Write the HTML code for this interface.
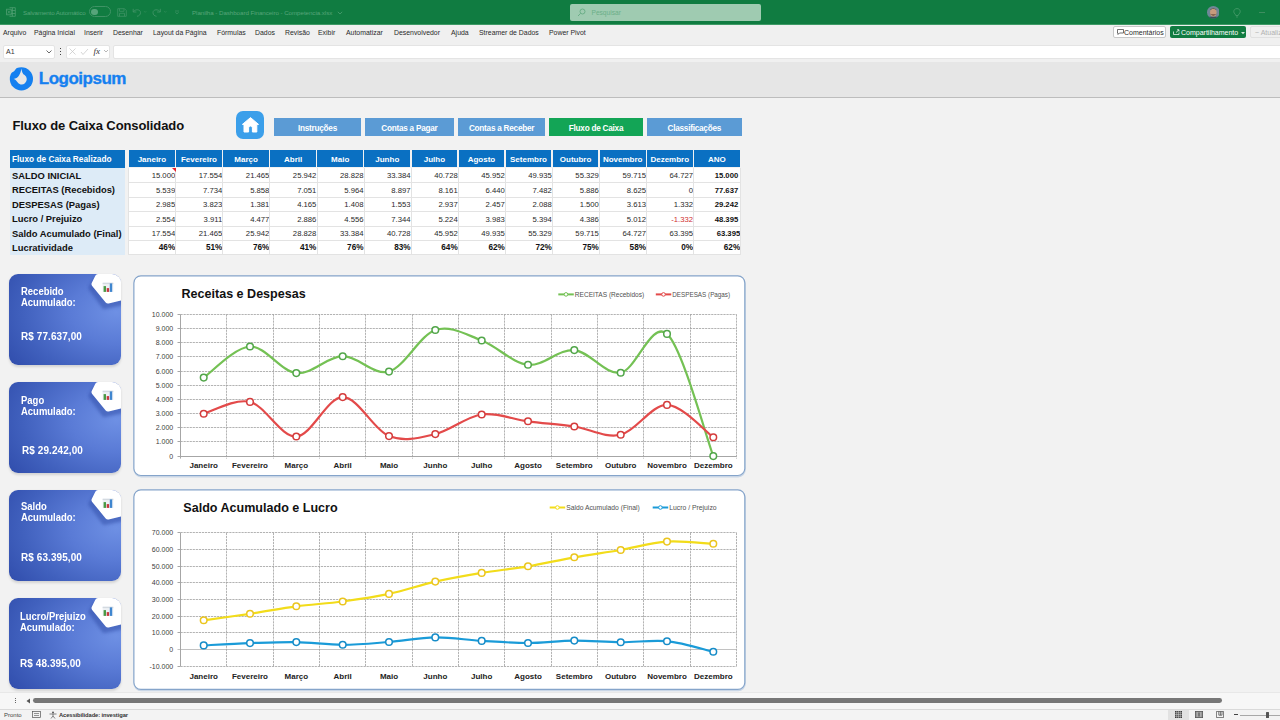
<!DOCTYPE html>
<html><head><meta charset="utf-8">
<style>
*{margin:0;padding:0;box-sizing:border-box;}
html,body{width:1280px;height:720px;overflow:hidden;background:#F2F2F2;font-family:"Liberation Sans",sans-serif;}
.abs{position:absolute;}
#titlebar{position:absolute;left:0;top:0;width:1280px;height:25px;background:#107C41;border-bottom:1px solid #3E9A66;}
#menubar{position:absolute;left:0;top:25px;width:1280px;height:37px;background:#F0F0F0;}
.menu{position:absolute;top:29.3px;font-size:6.9px;color:#2A2A2A;white-space:nowrap;}
#band{position:absolute;left:0;top:62px;width:1280px;height:36px;background:#E6E6E6;border-bottom:1.5px solid #BDBDBD;}
.tt{position:absolute;white-space:nowrap;}
.btn{position:absolute;top:118px;height:18px;background:#5B9BD5;color:#fff;font-size:8.2px;font-weight:bold;text-align:center;line-height:21px;letter-spacing:-0.24px;white-space:nowrap;}
.lh{position:absolute;background:#0A70C2;color:#fff;font-size:8.3px;font-weight:bold;line-height:18px;padding-left:2px;padding-top:0.8px;white-space:nowrap;}
.lbg{position:absolute;background:#DDEBF7;}
.mh{position:absolute;background:#0A70C2;color:#fff;font-size:8px;font-weight:bold;text-align:center;line-height:17px;padding-top:0.5px;white-space:nowrap;}
.dbg{position:absolute;background:#fff;}
.rl{position:absolute;font-size:9.4px;font-weight:bold;color:#111;white-space:nowrap;padding-top:1px;}
.dc{position:absolute;font-size:7.7px;color:#2A2A2A;text-align:right;white-space:nowrap;padding-top:1.6px;}
.dc.b{font-weight:bold;color:#111;}
.dc.neg{color:#D03030;}
.dc.ano{padding-right:2px;}
.dc.pc{font-size:8.2px;padding-top:1.2px;}
.vl{position:absolute;width:1px;background:#E3E3E3;}
.hl{position:absolute;height:1px;background:#E3E3E3;}
.card{position:absolute;left:9.4px;width:111.5px;border-radius:9px;overflow:hidden;background:radial-gradient(ellipse 125% 105% at 96% 42%,#6E90E4 0%,#5A7BD6 33%,#4060BD 68%,#2D49A8 100%);box-shadow:0 1.5px 2.5px rgba(0,0,0,0.13);}
.clab{position:absolute;color:#fff;font-size:10.2px;font-weight:bold;line-height:11px;white-space:nowrap;transform:scaleX(0.93);transform-origin:0 0;}
.cval{position:absolute;color:#fff;font-size:10.9px;font-weight:bold;line-height:12px;white-space:nowrap;transform:scaleX(0.915);transform-origin:0 0;letter-spacing:0.1px;}
svg text{font-family:"Liberation Sans",sans-serif;}
</style></head><body>
<div id="titlebar">
 <svg class="abs" style="left:6px;top:7px" width="10" height="10" viewBox="0 0 10 10"><path d="M3.5,0.7 H9.3 V9.3 H3.5 M3.5,3.5 H9.3 M3.5,6.5 H9.3 M6.4,0.7 V9.3" fill="none" stroke="#4F9F72" stroke-width="0.8"/><rect x="0.6" y="2.2" width="4.6" height="5.6" fill="#107C41" stroke="#4F9F72" stroke-width="0.8"/><path d="M1.8,3.6 L4,6.6 M4,3.6 L1.8,6.6" stroke="#4F9F72" stroke-width="0.7"/></svg>
 <div class="tt" style="left:23px;top:9px;font-size:6.2px;color:#57A57A;letter-spacing:-0.12px;">Salvamento Automático</div>
 <div class="abs" style="left:89.4px;top:6.3px;width:21.6px;height:10.6px;border:1px solid #3F9365;border-radius:6px;"></div>
 <div class="abs" style="left:91.3px;top:8.5px;width:6.4px;height:6.4px;background:#56A47A;border-radius:50%;"></div>
 <svg class="abs" style="left:116.5px;top:8px" width="10" height="9" viewBox="0 0 10 9"><path d="M0.7,0.7 H7.5 L9.3,2.5 V8.3 H0.7 Z M2.5,0.7 V3.3 H7 V0.7 M2.5,8.3 V5.3 H7.5 V8.3" fill="none" stroke="#3F9365" stroke-width="0.8"/></svg>
 <svg class="abs" style="left:132px;top:8px" width="16" height="10" viewBox="0 0 16 10"><path d="M1.2,0.8 V4 H4.4 M1.4,3.8 C3,1 8.5,1 8.5,4.6 C8.5,6.8 7,8 5,8.3" fill="none" stroke="#3F9365" stroke-width="0.9"/><path d="M12.2,3.3 L13.2,4.3 L14.2,3.3" fill="none" stroke="#3F9365" stroke-width="0.6"/></svg>
 <svg class="abs" style="left:152px;top:8px" width="16" height="10" viewBox="0 0 16 10"><path d="M8.3,0.8 V4 H5.1 M8.1,3.8 C6.5,1 1,1 1,4.6 C1,6.8 2.5,8 4.5,8.3" fill="none" stroke="#3F9365" stroke-width="0.9"/><path d="M12.3,3.3 L13.3,4.3 L14.3,3.3" fill="none" stroke="#3F9365" stroke-width="0.6"/></svg>
 <svg class="abs" style="left:174px;top:10px" width="6" height="5" viewBox="0 0 6 5"><path d="M1,1 H5 M1.4,2.2 L3,4 L4.6,2.2" fill="none" stroke="#3F9365" stroke-width="0.7"/></svg>
 <div class="tt" style="left:192px;top:9px;font-size:6.2px;color:#57A57A;letter-spacing:-0.05px;">Planilha - Dashboard Financeiro - Competencia.xlsx</div>
 <svg class="abs" style="left:336.5px;top:10.5px" width="6" height="4" viewBox="0 0 6 4"><path d="M0.8,0.8 L3,3 L5.2,0.8" fill="none" stroke="#57A57A" stroke-width="0.7"/></svg>
 <div class="abs" style="left:570px;top:4px;width:191px;height:17px;background:#9FCBB1;border-radius:2px;"></div>
 <svg class="abs" style="left:577px;top:8px" width="9" height="9" viewBox="0 0 9 9"><circle cx="5.5" cy="3.5" r="2.5" fill="none" stroke="#6BAF88" stroke-width="1"/><line x1="3.7" y1="5.3" x2="1" y2="8" stroke="#6BAF88" stroke-width="1"/></svg>
 <div class="tt" style="left:591.5px;top:9px;font-size:6.6px;color:#6BAF88;">Pesquisar</div>
 <svg class="abs" style="left:1206.5px;top:6.3px" width="12.6" height="12.6" viewBox="0 0 12.6 12.6"><defs><clipPath id="avc"><circle cx="6.3" cy="6.3" r="6.3"/></clipPath></defs><g clip-path="url(#avc)"><rect width="12.6" height="12.6" fill="#6F8797"/><ellipse cx="6.3" cy="6.6" rx="3.3" ry="4.2" fill="#C79B7C"/><path d="M2.8,5 C2.8,1.8 9.8,1.8 9.8,5 L9.4,3.8 C8,2.8 4.6,2.8 3.2,3.8 Z" fill="#3A2C25"/><path d="M3,6.8 C3,10.5 9.6,10.5 9.6,6.8 C9.2,9 8,8.6 6.3,8.6 C4.6,8.6 3.4,9 3,6.8 Z" fill="#4A3026"/><rect x="1" y="10.8" width="10.6" height="2" fill="#3D4C5A"/></g></svg>
 <svg class="abs" style="left:1233px;top:8px" width="8" height="10" viewBox="0 0 8 10"><path d="M4,0.6 C1.8,0.6 0.8,2.2 0.8,3.6 C0.8,5.3 2.6,6.3 2.9,7.6 L5.1,7.6 C5.4,6.3 7.2,5.3 7.2,3.6 C7.2,2.2 6.2,0.6 4,0.6 Z M3.2,9 L4.8,9" fill="none" stroke="#4E9E70" stroke-width="0.8"/></svg>
 <div class="abs" style="left:1259px;top:12px;width:6px;height:1px;background:#3E8E60;"></div>
</div>
<div id="menubar"></div>
<div class="menu" style="left:3px;">Arquivo</div>
<div class="menu" style="left:34px;">Página Inicial</div>
<div class="menu" style="left:84px;">Inserir</div>
<div class="menu" style="left:113px;">Desenhar</div>
<div class="menu" style="left:153px;">Layout da Página</div>
<div class="menu" style="left:217px;">Fórmulas</div>
<div class="menu" style="left:255px;">Dados</div>
<div class="menu" style="left:285px;">Revisão</div>
<div class="menu" style="left:318px;">Exibir</div>
<div class="menu" style="left:346px;">Automatizar</div>
<div class="menu" style="left:394px;">Desenvolvedor</div>
<div class="menu" style="left:451px;">Ajuda</div>
<div class="menu" style="left:479px;">Streamer de Dados</div>
<div class="menu" style="left:549px;">Power Pivot</div>
<div class="abs" style="left:1113px;top:26px;width:53px;height:12px;background:#fff;border:1px solid #C8C8C8;border-radius:2px;"></div>
<svg class="abs" style="left:1117px;top:29px" width="7" height="6" viewBox="0 0 7 6"><path d="M0.5,0.5 H6.5 V4 H2.5 L1,5.5 V4 H0.5 Z" fill="none" stroke="#333" stroke-width="0.7"/></svg>
<div class="menu" style="left:1124px;top:28.5px;font-size:7px;">Comentários</div>
<div class="abs" style="left:1170px;top:26px;width:76px;height:12px;background:#107C41;border-radius:2px;"></div>
<svg class="abs" style="left:1173px;top:29px" width="7" height="6" viewBox="0 0 7 6"><path d="M0.5,2.5 V5.5 H6 V3.5 M3,3.5 L6,0.8 M4,0.8 H6 V2.5" fill="none" stroke="#fff" stroke-width="0.7"/></svg>
<div class="menu" style="left:1181px;top:28.5px;font-size:7px;color:#fff;">Compartilhamento</div>
<svg class="abs" style="left:1240.5px;top:31.5px" width="4" height="3" viewBox="0 0 4 3"><path d="M0,0 H4 L2,2.2 Z" fill="#CDE6D6"/></svg>
<div class="abs" style="left:1250px;top:26px;width:35px;height:12px;border:1px solid #E0E0E0;border-radius:2px;"></div>
<div class="menu" style="left:1255px;top:28.5px;font-size:7px;color:#B0B0B0;">~ Atualiz</div>
<!-- formula bar -->
<div class="abs" style="left:3px;top:45.4px;width:52px;height:13.6px;background:#fff;border-radius:2px;border:1px solid #E4E4E4;"></div>
<div class="tt" style="left:6px;top:48px;font-size:7px;color:#333;">A1</div>
<svg class="abs" style="left:46px;top:50px" width="6" height="4" viewBox="0 0 6 4"><path d="M0.5,0.5 L3,3 L5.5,0.5" fill="none" stroke="#444" stroke-width="0.8"/></svg>
<div class="abs" style="left:60px;top:48px;width:1.3px;height:1.3px;background:#444;"></div>
<div class="abs" style="left:60px;top:51px;width:1.3px;height:1.3px;background:#444;"></div>
<div class="abs" style="left:60px;top:54px;width:1.3px;height:1.3px;background:#444;"></div>
<div class="abs" style="left:66px;top:45.4px;width:44px;height:13.6px;background:#fff;border-radius:2px;border:1px solid #E4E4E4;"></div>
<svg class="abs" style="left:69px;top:48px" width="40" height="8" viewBox="0 0 40 8"><path d="M0.5,0.5 L6.5,6.5 M6.5,0.5 L0.5,6.5" stroke="#C4C4C4" stroke-width="0.7"/><path d="M12,4 L14,6.5 L19,1" fill="none" stroke="#C4C4C4" stroke-width="0.7"/><path d="M35,2 L37,4 L39,2" fill="none" stroke="#888" stroke-width="0.6"/></svg>
<div class="tt" style="left:93.5px;top:45.5px;font-size:9px;font-style:italic;font-family:'Liberation Serif',serif;color:#333;">fx</div>
<div class="abs" style="left:113px;top:45.4px;width:1170px;height:13.6px;background:#fff;border-radius:2px;border:1px solid #E4E4E4;"></div>
<!-- header band -->
<div id="band"></div>
<svg class="abs" style="left:5px;top:62px" width="30" height="32" viewBox="0 0 30 32"><circle cx="16.4" cy="16.9" r="11.6" fill="#1580F0"/><path d="M0,0 L0,14 L5.4,11.1 Q9.8,9.8 11.4,5.7 L14,0 Z" fill="#E6E6E6"/><path d="M16.4,6.6 C16.8,9.7 17.8,12.4 19.6,13.1 A5.2,5.2 0 1 1 11.9,19.6 C10.9,17.8 9.8,17.1 8.6,16.9 C10.8,16.4 12.6,15.6 14,13.4 C15.4,11.2 16.1,9.2 16.4,6.6 Z" fill="#E6E6E6"/></svg>
<div class="tt" style="left:38.8px;top:68.7px;font-size:17px;font-weight:bold;color:#1580F0;letter-spacing:-0.5px;-webkit-text-stroke:0.35px #1580F0;">Logoipsum</div>
<!-- title + buttons -->
<div class="tt" style="left:12.5px;top:118px;font-size:13px;font-weight:bold;color:#111;letter-spacing:-0.1px;">Fluxo de Caixa Consolidado</div>
<div class="abs" style="left:236.3px;top:110.6px;width:28px;height:28.4px;background:#3B9FEA;border-radius:7px;"></div>
<svg class="abs" style="left:241px;top:116px" width="19" height="18" viewBox="0 0 19 18"><path d="M9.5,1.6 L1.4,8.4 L3,8.4 L3,16 L7.6,16 L7.6,11.9 A1.9,1.9 0 0 1 11.4,11.9 L11.4,16 L15.8,16 L15.8,8.4 L17.5,8.4 Z" fill="#fff" stroke="#fff" stroke-width="1" stroke-linejoin="round"/></svg>
<div class="btn" style="left:273.8px;width:87.4px;">Instruções</div>
<div class="btn" style="left:365.2px;width:88.4px;">Contas a Pagar</div>
<div class="btn" style="left:457.8px;width:87.6px;">Contas a Receber</div>
<div class="btn" style="left:548.6px;width:94.8px;background:#13A556;">Fluxo de Caixa</div>
<div class="btn" style="left:647px;width:94.6px;">Classificações</div>
<div class="lh" style="left:10px;top:149.5px;width:115px;height:18px;">Fluxo de Caixa Realizado</div>
<div class="lbg" style="left:10px;top:167.5px;width:115px;height:87px;"></div>
<div class="mh" style="left:129.0px;top:150px;width:45.8px;height:17px;">Janeiro</div>
<div class="mh" style="left:176.1px;top:150px;width:45.8px;height:17px;">Fevereiro</div>
<div class="mh" style="left:223.2px;top:150px;width:45.8px;height:17px;">Março</div>
<div class="mh" style="left:270.2px;top:150px;width:45.8px;height:17px;">Abril</div>
<div class="mh" style="left:317.3px;top:150px;width:45.8px;height:17px;">Maio</div>
<div class="mh" style="left:364.4px;top:150px;width:45.8px;height:17px;">Junho</div>
<div class="mh" style="left:411.5px;top:150px;width:45.8px;height:17px;">Julho</div>
<div class="mh" style="left:458.6px;top:150px;width:45.8px;height:17px;">Agosto</div>
<div class="mh" style="left:505.6px;top:150px;width:45.8px;height:17px;">Setembro</div>
<div class="mh" style="left:552.7px;top:150px;width:45.8px;height:17px;">Outubro</div>
<div class="mh" style="left:599.8px;top:150px;width:45.8px;height:17px;">Novembro</div>
<div class="mh" style="left:646.9px;top:150px;width:45.8px;height:17px;">Dezembro</div>
<div class="mh" style="left:694.0px;top:150px;width:45.8px;height:17px;">ANO</div>
<div class="dbg" style="left:129px;top:167.5px;width:612px;height:87px;"></div>
<div class="rl" style="left:12px;top:167.8px;height:14.5px;line-height:14.5px;">SALDO INICIAL</div>
<div class="dc" style="left:129.0px;top:167.8px;width:46.2px;height:14.5px;line-height:14.5px;">15.000</div>
<div class="dc" style="left:176.1px;top:167.8px;width:46.2px;height:14.5px;line-height:14.5px;">17.554</div>
<div class="dc" style="left:223.2px;top:167.8px;width:46.2px;height:14.5px;line-height:14.5px;">21.465</div>
<div class="dc" style="left:270.2px;top:167.8px;width:46.2px;height:14.5px;line-height:14.5px;">25.942</div>
<div class="dc" style="left:317.3px;top:167.8px;width:46.2px;height:14.5px;line-height:14.5px;">28.828</div>
<div class="dc" style="left:364.4px;top:167.8px;width:46.2px;height:14.5px;line-height:14.5px;">33.384</div>
<div class="dc" style="left:411.5px;top:167.8px;width:46.2px;height:14.5px;line-height:14.5px;">40.728</div>
<div class="dc" style="left:458.6px;top:167.8px;width:46.2px;height:14.5px;line-height:14.5px;">45.952</div>
<div class="dc" style="left:505.6px;top:167.8px;width:46.2px;height:14.5px;line-height:14.5px;">49.935</div>
<div class="dc" style="left:552.7px;top:167.8px;width:46.2px;height:14.5px;line-height:14.5px;">55.329</div>
<div class="dc" style="left:599.8px;top:167.8px;width:46.2px;height:14.5px;line-height:14.5px;">59.715</div>
<div class="dc" style="left:646.9px;top:167.8px;width:46.2px;height:14.5px;line-height:14.5px;">64.727</div>
<div class="dc b ano" style="left:694.0px;top:167.8px;width:46.2px;height:14.5px;line-height:14.5px;">15.000</div>
<div class="rl" style="left:12px;top:182.3px;height:14.5px;line-height:14.5px;">RECEITAS (Recebidos)</div>
<div class="dc" style="left:129.0px;top:182.3px;width:46.2px;height:14.5px;line-height:14.5px;">5.539</div>
<div class="dc" style="left:176.1px;top:182.3px;width:46.2px;height:14.5px;line-height:14.5px;">7.734</div>
<div class="dc" style="left:223.2px;top:182.3px;width:46.2px;height:14.5px;line-height:14.5px;">5.858</div>
<div class="dc" style="left:270.2px;top:182.3px;width:46.2px;height:14.5px;line-height:14.5px;">7.051</div>
<div class="dc" style="left:317.3px;top:182.3px;width:46.2px;height:14.5px;line-height:14.5px;">5.964</div>
<div class="dc" style="left:364.4px;top:182.3px;width:46.2px;height:14.5px;line-height:14.5px;">8.897</div>
<div class="dc" style="left:411.5px;top:182.3px;width:46.2px;height:14.5px;line-height:14.5px;">8.161</div>
<div class="dc" style="left:458.6px;top:182.3px;width:46.2px;height:14.5px;line-height:14.5px;">6.440</div>
<div class="dc" style="left:505.6px;top:182.3px;width:46.2px;height:14.5px;line-height:14.5px;">7.482</div>
<div class="dc" style="left:552.7px;top:182.3px;width:46.2px;height:14.5px;line-height:14.5px;">5.886</div>
<div class="dc" style="left:599.8px;top:182.3px;width:46.2px;height:14.5px;line-height:14.5px;">8.625</div>
<div class="dc" style="left:646.9px;top:182.3px;width:46.2px;height:14.5px;line-height:14.5px;">0</div>
<div class="dc b ano" style="left:694.0px;top:182.3px;width:46.2px;height:14.5px;line-height:14.5px;">77.637</div>
<div class="rl" style="left:12px;top:196.8px;height:14.5px;line-height:14.5px;">DESPESAS (Pagas)</div>
<div class="dc" style="left:129.0px;top:196.8px;width:46.2px;height:14.5px;line-height:14.5px;">2.985</div>
<div class="dc" style="left:176.1px;top:196.8px;width:46.2px;height:14.5px;line-height:14.5px;">3.823</div>
<div class="dc" style="left:223.2px;top:196.8px;width:46.2px;height:14.5px;line-height:14.5px;">1.381</div>
<div class="dc" style="left:270.2px;top:196.8px;width:46.2px;height:14.5px;line-height:14.5px;">4.165</div>
<div class="dc" style="left:317.3px;top:196.8px;width:46.2px;height:14.5px;line-height:14.5px;">1.408</div>
<div class="dc" style="left:364.4px;top:196.8px;width:46.2px;height:14.5px;line-height:14.5px;">1.553</div>
<div class="dc" style="left:411.5px;top:196.8px;width:46.2px;height:14.5px;line-height:14.5px;">2.937</div>
<div class="dc" style="left:458.6px;top:196.8px;width:46.2px;height:14.5px;line-height:14.5px;">2.457</div>
<div class="dc" style="left:505.6px;top:196.8px;width:46.2px;height:14.5px;line-height:14.5px;">2.088</div>
<div class="dc" style="left:552.7px;top:196.8px;width:46.2px;height:14.5px;line-height:14.5px;">1.500</div>
<div class="dc" style="left:599.8px;top:196.8px;width:46.2px;height:14.5px;line-height:14.5px;">3.613</div>
<div class="dc" style="left:646.9px;top:196.8px;width:46.2px;height:14.5px;line-height:14.5px;">1.332</div>
<div class="dc b ano" style="left:694.0px;top:196.8px;width:46.2px;height:14.5px;line-height:14.5px;">29.242</div>
<div class="rl" style="left:12px;top:211.3px;height:14.5px;line-height:14.5px;">Lucro / Prejuizo</div>
<div class="dc" style="left:129.0px;top:211.3px;width:46.2px;height:14.5px;line-height:14.5px;">2.554</div>
<div class="dc" style="left:176.1px;top:211.3px;width:46.2px;height:14.5px;line-height:14.5px;">3.911</div>
<div class="dc" style="left:223.2px;top:211.3px;width:46.2px;height:14.5px;line-height:14.5px;">4.477</div>
<div class="dc" style="left:270.2px;top:211.3px;width:46.2px;height:14.5px;line-height:14.5px;">2.886</div>
<div class="dc" style="left:317.3px;top:211.3px;width:46.2px;height:14.5px;line-height:14.5px;">4.556</div>
<div class="dc" style="left:364.4px;top:211.3px;width:46.2px;height:14.5px;line-height:14.5px;">7.344</div>
<div class="dc" style="left:411.5px;top:211.3px;width:46.2px;height:14.5px;line-height:14.5px;">5.224</div>
<div class="dc" style="left:458.6px;top:211.3px;width:46.2px;height:14.5px;line-height:14.5px;">3.983</div>
<div class="dc" style="left:505.6px;top:211.3px;width:46.2px;height:14.5px;line-height:14.5px;">5.394</div>
<div class="dc" style="left:552.7px;top:211.3px;width:46.2px;height:14.5px;line-height:14.5px;">4.386</div>
<div class="dc" style="left:599.8px;top:211.3px;width:46.2px;height:14.5px;line-height:14.5px;">5.012</div>
<div class="dc neg" style="left:646.9px;top:211.3px;width:46.2px;height:14.5px;line-height:14.5px;">-1.332</div>
<div class="dc b ano" style="left:694.0px;top:211.3px;width:46.2px;height:14.5px;line-height:14.5px;">48.395</div>
<div class="rl" style="left:12px;top:225.8px;height:14.5px;line-height:14.5px;">Saldo Acumulado (Final)</div>
<div class="dc" style="left:129.0px;top:225.8px;width:46.2px;height:14.5px;line-height:14.5px;">17.554</div>
<div class="dc" style="left:176.1px;top:225.8px;width:46.2px;height:14.5px;line-height:14.5px;">21.465</div>
<div class="dc" style="left:223.2px;top:225.8px;width:46.2px;height:14.5px;line-height:14.5px;">25.942</div>
<div class="dc" style="left:270.2px;top:225.8px;width:46.2px;height:14.5px;line-height:14.5px;">28.828</div>
<div class="dc" style="left:317.3px;top:225.8px;width:46.2px;height:14.5px;line-height:14.5px;">33.384</div>
<div class="dc" style="left:364.4px;top:225.8px;width:46.2px;height:14.5px;line-height:14.5px;">40.728</div>
<div class="dc" style="left:411.5px;top:225.8px;width:46.2px;height:14.5px;line-height:14.5px;">45.952</div>
<div class="dc" style="left:458.6px;top:225.8px;width:46.2px;height:14.5px;line-height:14.5px;">49.935</div>
<div class="dc" style="left:505.6px;top:225.8px;width:46.2px;height:14.5px;line-height:14.5px;">55.329</div>
<div class="dc" style="left:552.7px;top:225.8px;width:46.2px;height:14.5px;line-height:14.5px;">59.715</div>
<div class="dc" style="left:599.8px;top:225.8px;width:46.2px;height:14.5px;line-height:14.5px;">64.727</div>
<div class="dc" style="left:646.9px;top:225.8px;width:46.2px;height:14.5px;line-height:14.5px;">63.395</div>
<div class="dc b" style="left:694.0px;top:225.8px;width:46.2px;height:14.5px;line-height:14.5px;">63.395</div>
<div class="rl" style="left:12px;top:240.3px;height:14.1px;line-height:14.1px;">Lucratividade</div>
<div class="dc b pc" style="left:129.0px;top:240.3px;width:46.2px;height:14.1px;line-height:14.1px;">46%</div>
<div class="dc b pc" style="left:176.1px;top:240.3px;width:46.2px;height:14.1px;line-height:14.1px;">51%</div>
<div class="dc b pc" style="left:223.2px;top:240.3px;width:46.2px;height:14.1px;line-height:14.1px;">76%</div>
<div class="dc b pc" style="left:270.2px;top:240.3px;width:46.2px;height:14.1px;line-height:14.1px;">41%</div>
<div class="dc b pc" style="left:317.3px;top:240.3px;width:46.2px;height:14.1px;line-height:14.1px;">76%</div>
<div class="dc b pc" style="left:364.4px;top:240.3px;width:46.2px;height:14.1px;line-height:14.1px;">83%</div>
<div class="dc b pc" style="left:411.5px;top:240.3px;width:46.2px;height:14.1px;line-height:14.1px;">64%</div>
<div class="dc b pc" style="left:458.6px;top:240.3px;width:46.2px;height:14.1px;line-height:14.1px;">62%</div>
<div class="dc b pc" style="left:505.6px;top:240.3px;width:46.2px;height:14.1px;line-height:14.1px;">72%</div>
<div class="dc b pc" style="left:552.7px;top:240.3px;width:46.2px;height:14.1px;line-height:14.1px;">75%</div>
<div class="dc b pc" style="left:599.8px;top:240.3px;width:46.2px;height:14.1px;line-height:14.1px;">58%</div>
<div class="dc b pc" style="left:646.9px;top:240.3px;width:46.2px;height:14.1px;line-height:14.1px;">0%</div>
<div class="dc b pc" style="left:694.0px;top:240.3px;width:46.2px;height:14.1px;line-height:14.1px;">62%</div>
<div class="vl" style="left:128.2px;top:167.5px;height:87px;"></div>
<div class="vl" style="left:175.3px;top:167.5px;height:87px;"></div>
<div class="vl" style="left:222.4px;top:167.5px;height:87px;"></div>
<div class="vl" style="left:269.4px;top:167.5px;height:87px;"></div>
<div class="vl" style="left:316.5px;top:167.5px;height:87px;"></div>
<div class="vl" style="left:363.6px;top:167.5px;height:87px;"></div>
<div class="vl" style="left:410.7px;top:167.5px;height:87px;"></div>
<div class="vl" style="left:457.8px;top:167.5px;height:87px;"></div>
<div class="vl" style="left:504.8px;top:167.5px;height:87px;"></div>
<div class="vl" style="left:551.9px;top:167.5px;height:87px;"></div>
<div class="vl" style="left:599.0px;top:167.5px;height:87px;"></div>
<div class="vl" style="left:646.1px;top:167.5px;height:87px;"></div>
<div class="vl" style="left:693.2px;top:167.5px;height:87px;"></div>
<div class="vl" style="left:740.2px;top:167.5px;height:87px;"></div>
<div class="hl" style="left:129px;top:182.3px;width:612px;"></div>
<div class="hl" style="left:129px;top:196.8px;width:612px;"></div>
<div class="hl" style="left:129px;top:211.3px;width:612px;"></div>
<div class="hl" style="left:129px;top:225.8px;width:612px;"></div>
<div class="hl" style="left:129px;top:240.3px;width:612px;"></div>
<div class="hl" style="left:129px;top:254.4px;width:612px;"></div>
<svg class="abs" style="left:171.8px;top:167.6px" width="4" height="4" viewBox="0 0 4 4"><path d="M0,0 H4 V4 Z" fill="#E8202A"/></svg>
<div class="card" style="top:273.9px;height:91.6px;">
<svg class="abs" style="left:0;top:0" width="112" height="40" viewBox="0 0 112 40"><defs><filter id="bl" x="-50%" y="-50%" width="200%" height="200%"><feGaussianBlur stdDeviation="1.6"/></filter></defs>
<path d="M89,4 L114,4 L114,25.5 L98,29 L85,11 Z" fill="#2C46A0" opacity="0.45" stroke="#2C46A0" stroke-width="6" stroke-linejoin="round" transform="translate(-2.5,3)" filter="url(#bl)"/>
<path d="M89,3 L114,3 L114,23 L99,26.5 L85.5,10 Z" fill="#fff" stroke="#fff" stroke-width="6" stroke-linejoin="round"/>
<svg x="93.4" y="8.1" width="11.2" height="10" viewBox="0 0 11.2 10"><rect x="0" y="0" width="11.2" height="10" fill="#EEF1F5"/><line x1="0" y1="1.5" x2="11.2" y2="1.5" stroke="#C9D0D8" stroke-width="0.8"/><rect x="1.2" y="4" width="2.4" height="5.8" fill="#4A9A45"/><rect x="4.3" y="6" width="2.4" height="3.8" fill="#C8383F"/><rect x="7.4" y="1.3" width="2.4" height="8.5" fill="#3F86CF"/></svg>
</svg>
<div class="clab" style="left:11.4px;top:12.6px;">Recebido<br>Acumulado:</div><div class="cval" style="left:12.1px;top:55.9px;">R$ 77.637,00</div></div>
<div class="card" style="top:381.7px;height:91.2px;">
<svg class="abs" style="left:0;top:0" width="112" height="40" viewBox="0 0 112 40"><defs><filter id="bl" x="-50%" y="-50%" width="200%" height="200%"><feGaussianBlur stdDeviation="1.6"/></filter></defs>
<path d="M89,4 L114,4 L114,25.5 L98,29 L85,11 Z" fill="#2C46A0" opacity="0.45" stroke="#2C46A0" stroke-width="6" stroke-linejoin="round" transform="translate(-2.5,3)" filter="url(#bl)"/>
<path d="M89,3 L114,3 L114,23 L99,26.5 L85.5,10 Z" fill="#fff" stroke="#fff" stroke-width="6" stroke-linejoin="round"/>
<svg x="93.4" y="8.1" width="11.2" height="10" viewBox="0 0 11.2 10"><rect x="0" y="0" width="11.2" height="10" fill="#EEF1F5"/><line x1="0" y1="1.5" x2="11.2" y2="1.5" stroke="#C9D0D8" stroke-width="0.8"/><rect x="1.2" y="4" width="2.4" height="5.8" fill="#4A9A45"/><rect x="4.3" y="6" width="2.4" height="3.8" fill="#C8383F"/><rect x="7.4" y="1.3" width="2.4" height="8.5" fill="#3F86CF"/></svg>
</svg>
<div class="clab" style="left:12.1px;top:13.3px;">Pago<br>Acumulado:</div><div class="cval" style="left:12.8px;top:62.7px;">R$ 29.242,00</div></div>
<div class="card" style="top:489.9px;height:90.9px;">
<svg class="abs" style="left:0;top:0" width="112" height="40" viewBox="0 0 112 40"><defs><filter id="bl" x="-50%" y="-50%" width="200%" height="200%"><feGaussianBlur stdDeviation="1.6"/></filter></defs>
<path d="M89,4 L114,4 L114,25.5 L98,29 L85,11 Z" fill="#2C46A0" opacity="0.45" stroke="#2C46A0" stroke-width="6" stroke-linejoin="round" transform="translate(-2.5,3)" filter="url(#bl)"/>
<path d="M89,3 L114,3 L114,23 L99,26.5 L85.5,10 Z" fill="#fff" stroke="#fff" stroke-width="6" stroke-linejoin="round"/>
<svg x="93.4" y="8.1" width="11.2" height="10" viewBox="0 0 11.2 10"><rect x="0" y="0" width="11.2" height="10" fill="#EEF1F5"/><line x1="0" y1="1.5" x2="11.2" y2="1.5" stroke="#C9D0D8" stroke-width="0.8"/><rect x="1.2" y="4" width="2.4" height="5.8" fill="#4A9A45"/><rect x="4.3" y="6" width="2.4" height="3.8" fill="#C8383F"/><rect x="7.4" y="1.3" width="2.4" height="8.5" fill="#3F86CF"/></svg>
</svg>
<div class="clab" style="left:11.9px;top:11.6px;">Saldo<br>Acumulado:</div><div class="cval" style="left:12.1px;top:60.7px;">R$ 63.395,00</div></div>
<div class="card" style="top:598.3px;height:91.0px;">
<svg class="abs" style="left:0;top:0" width="112" height="40" viewBox="0 0 112 40"><defs><filter id="bl" x="-50%" y="-50%" width="200%" height="200%"><feGaussianBlur stdDeviation="1.6"/></filter></defs>
<path d="M89,4 L114,4 L114,25.5 L98,29 L85,11 Z" fill="#2C46A0" opacity="0.45" stroke="#2C46A0" stroke-width="6" stroke-linejoin="round" transform="translate(-2.5,3)" filter="url(#bl)"/>
<path d="M89,3 L114,3 L114,23 L99,26.5 L85.5,10 Z" fill="#fff" stroke="#fff" stroke-width="6" stroke-linejoin="round"/>
<svg x="93.4" y="8.1" width="11.2" height="10" viewBox="0 0 11.2 10"><rect x="0" y="0" width="11.2" height="10" fill="#EEF1F5"/><line x1="0" y1="1.5" x2="11.2" y2="1.5" stroke="#C9D0D8" stroke-width="0.8"/><rect x="1.2" y="4" width="2.4" height="5.8" fill="#4A9A45"/><rect x="4.3" y="6" width="2.4" height="3.8" fill="#C8383F"/><rect x="7.4" y="1.3" width="2.4" height="8.5" fill="#3F86CF"/></svg>
</svg>
<div class="clab" style="left:10.7px;top:12.4px;">Lucro/Prejuizo<br>Acumulado:</div><div class="cval" style="left:10.7px;top:59.0px;">R$ 48.395,00</div></div>
<svg class="abs" style="left:0;top:0" width="1280" height="720">
<rect x="134.2" y="277.1" width="610.9" height="199.5" rx="7" ry="7" fill="none" stroke="#C9D6E6" stroke-width="1.6"/>
<rect x="133.9" y="275.9" width="610.9" height="199.6" rx="7" ry="7" fill="#fff" stroke="#85A4CA" stroke-width="1.15"/>
<text x="181.5" y="297.6" font-size="12.55" font-weight="bold" fill="#111">Receitas e Despesas</text>
<line x1="177.5" y1="456.5" x2="736.5" y2="456.5" stroke="#A6A6A6" stroke-width="1"/>
<text x="173.2" y="458.6" font-size="7" fill="#404040" text-anchor="end">0</text>
<line x1="180.5" y1="441.5" x2="736.5" y2="441.5" stroke="#A0A0A0" stroke-width="0.8" stroke-dasharray="2.2,0.85"/>
<line x1="177.5" y1="441.5" x2="180.5" y2="441.5" stroke="#A6A6A6" stroke-width="1"/>
<text x="173.2" y="444.4" font-size="7" fill="#404040" text-anchor="end">1.000</text>
<line x1="180.5" y1="427.5" x2="736.5" y2="427.5" stroke="#A0A0A0" stroke-width="0.8" stroke-dasharray="2.2,0.85"/>
<line x1="177.5" y1="427.5" x2="180.5" y2="427.5" stroke="#A6A6A6" stroke-width="1"/>
<text x="173.2" y="430.3" font-size="7" fill="#404040" text-anchor="end">2.000</text>
<line x1="180.5" y1="413.5" x2="736.5" y2="413.5" stroke="#A0A0A0" stroke-width="0.8" stroke-dasharray="2.2,0.85"/>
<line x1="177.5" y1="413.5" x2="180.5" y2="413.5" stroke="#A6A6A6" stroke-width="1"/>
<text x="173.2" y="416.1" font-size="7" fill="#404040" text-anchor="end">3.000</text>
<line x1="180.5" y1="399.5" x2="736.5" y2="399.5" stroke="#A0A0A0" stroke-width="0.8" stroke-dasharray="2.2,0.85"/>
<line x1="177.5" y1="399.5" x2="180.5" y2="399.5" stroke="#A6A6A6" stroke-width="1"/>
<text x="173.2" y="401.9" font-size="7" fill="#404040" text-anchor="end">4.000</text>
<line x1="180.5" y1="385.5" x2="736.5" y2="385.5" stroke="#A0A0A0" stroke-width="0.8" stroke-dasharray="2.2,0.85"/>
<line x1="177.5" y1="385.5" x2="180.5" y2="385.5" stroke="#A6A6A6" stroke-width="1"/>
<text x="173.2" y="387.8" font-size="7" fill="#404040" text-anchor="end">5.000</text>
<line x1="180.5" y1="371.5" x2="736.5" y2="371.5" stroke="#A0A0A0" stroke-width="0.8" stroke-dasharray="2.2,0.85"/>
<line x1="177.5" y1="371.5" x2="180.5" y2="371.5" stroke="#A6A6A6" stroke-width="1"/>
<text x="173.2" y="373.6" font-size="7" fill="#404040" text-anchor="end">6.000</text>
<line x1="180.5" y1="356.5" x2="736.5" y2="356.5" stroke="#A0A0A0" stroke-width="0.8" stroke-dasharray="2.2,0.85"/>
<line x1="177.5" y1="356.5" x2="180.5" y2="356.5" stroke="#A6A6A6" stroke-width="1"/>
<text x="173.2" y="359.4" font-size="7" fill="#404040" text-anchor="end">7.000</text>
<line x1="180.5" y1="342.5" x2="736.5" y2="342.5" stroke="#A0A0A0" stroke-width="0.8" stroke-dasharray="2.2,0.85"/>
<line x1="177.5" y1="342.5" x2="180.5" y2="342.5" stroke="#A6A6A6" stroke-width="1"/>
<text x="173.2" y="345.2" font-size="7" fill="#404040" text-anchor="end">8.000</text>
<line x1="180.5" y1="328.5" x2="736.5" y2="328.5" stroke="#A0A0A0" stroke-width="0.8" stroke-dasharray="2.2,0.85"/>
<line x1="177.5" y1="328.5" x2="180.5" y2="328.5" stroke="#A6A6A6" stroke-width="1"/>
<text x="173.2" y="331.1" font-size="7" fill="#404040" text-anchor="end">9.000</text>
<line x1="180.5" y1="314.5" x2="736.5" y2="314.5" stroke="#A0A0A0" stroke-width="0.8" stroke-dasharray="2.2,0.85"/>
<line x1="177.5" y1="314.5" x2="180.5" y2="314.5" stroke="#A6A6A6" stroke-width="1"/>
<text x="173.2" y="316.9" font-size="7" fill="#404040" text-anchor="end">10.000</text>
<line x1="180.5" y1="314.4" x2="180.5" y2="458.6" stroke="#A6A6A6" stroke-width="1"/>
<line x1="226.5" y1="314.4" x2="226.5" y2="458.6" stroke="#A0A0A0" stroke-width="0.8" stroke-dasharray="2.2,0.85"/>
<line x1="273.5" y1="314.4" x2="273.5" y2="458.6" stroke="#A0A0A0" stroke-width="0.8" stroke-dasharray="2.2,0.85"/>
<line x1="319.5" y1="314.4" x2="319.5" y2="458.6" stroke="#A0A0A0" stroke-width="0.8" stroke-dasharray="2.2,0.85"/>
<line x1="365.5" y1="314.4" x2="365.5" y2="458.6" stroke="#A0A0A0" stroke-width="0.8" stroke-dasharray="2.2,0.85"/>
<line x1="412.5" y1="314.4" x2="412.5" y2="458.6" stroke="#A0A0A0" stroke-width="0.8" stroke-dasharray="2.2,0.85"/>
<line x1="458.5" y1="314.4" x2="458.5" y2="458.6" stroke="#A0A0A0" stroke-width="0.8" stroke-dasharray="2.2,0.85"/>
<line x1="504.5" y1="314.4" x2="504.5" y2="458.6" stroke="#A0A0A0" stroke-width="0.8" stroke-dasharray="2.2,0.85"/>
<line x1="551.5" y1="314.4" x2="551.5" y2="458.6" stroke="#A0A0A0" stroke-width="0.8" stroke-dasharray="2.2,0.85"/>
<line x1="597.5" y1="314.4" x2="597.5" y2="458.6" stroke="#A0A0A0" stroke-width="0.8" stroke-dasharray="2.2,0.85"/>
<line x1="643.5" y1="314.4" x2="643.5" y2="458.6" stroke="#A0A0A0" stroke-width="0.8" stroke-dasharray="2.2,0.85"/>
<line x1="690.5" y1="314.4" x2="690.5" y2="458.6" stroke="#A0A0A0" stroke-width="0.8" stroke-dasharray="2.2,0.85"/>
<line x1="736.5" y1="314.4" x2="736.5" y2="458.6" stroke="#A0A0A0" stroke-width="0.8" stroke-dasharray="2.2,0.85"/>
<text x="203.7" y="468.3" font-size="8" font-weight="bold" fill="#222" text-anchor="middle">Janeiro</text>
<text x="250.0" y="468.3" font-size="8" font-weight="bold" fill="#222" text-anchor="middle">Fevereiro</text>
<text x="296.3" y="468.3" font-size="8" font-weight="bold" fill="#222" text-anchor="middle">Março</text>
<text x="342.7" y="468.3" font-size="8" font-weight="bold" fill="#222" text-anchor="middle">Abril</text>
<text x="389.0" y="468.3" font-size="8" font-weight="bold" fill="#222" text-anchor="middle">Maio</text>
<text x="435.3" y="468.3" font-size="8" font-weight="bold" fill="#222" text-anchor="middle">Junho</text>
<text x="481.7" y="468.3" font-size="8" font-weight="bold" fill="#222" text-anchor="middle">Julho</text>
<text x="528.0" y="468.3" font-size="8" font-weight="bold" fill="#222" text-anchor="middle">Agosto</text>
<text x="574.3" y="468.3" font-size="8" font-weight="bold" fill="#222" text-anchor="middle">Setembro</text>
<text x="620.7" y="468.3" font-size="8" font-weight="bold" fill="#222" text-anchor="middle">Outubro</text>
<text x="667.0" y="468.3" font-size="8" font-weight="bold" fill="#222" text-anchor="middle">Novembro</text>
<text x="713.3" y="468.3" font-size="8" font-weight="bold" fill="#222" text-anchor="middle">Dezembro</text>
<path d="M203.7,377.6 C211.4,372.4 234.6,347.3 250.0,346.5 C265.4,345.8 280.9,371.5 296.3,373.1 C311.8,374.7 327.2,356.4 342.7,356.2 C358.1,355.9 373.6,375.9 389.0,371.6 C404.4,367.2 419.9,335.2 435.3,330.0 C450.8,324.8 466.2,334.7 481.7,340.5 C497.1,346.3 512.6,363.2 528.0,364.8 C543.4,366.4 558.9,348.8 574.3,350.1 C589.8,351.4 605.2,375.4 620.7,372.7 C636.1,370.0 651.6,320.0 667.0,333.9 C682.4,347.8 705.6,435.7 713.3,456.1" fill="none" stroke="#74C154" stroke-width="2.2" stroke-linecap="round"/>
<circle cx="203.7" cy="377.6" r="3.3" fill="#fff" stroke="#52A64A" stroke-width="1.5"/>
<circle cx="250.0" cy="346.5" r="3.3" fill="#fff" stroke="#52A64A" stroke-width="1.5"/>
<circle cx="296.3" cy="373.1" r="3.3" fill="#fff" stroke="#52A64A" stroke-width="1.5"/>
<circle cx="342.7" cy="356.2" r="3.3" fill="#fff" stroke="#52A64A" stroke-width="1.5"/>
<circle cx="389.0" cy="371.6" r="3.3" fill="#fff" stroke="#52A64A" stroke-width="1.5"/>
<circle cx="435.3" cy="330.0" r="3.3" fill="#fff" stroke="#52A64A" stroke-width="1.5"/>
<circle cx="481.7" cy="340.5" r="3.3" fill="#fff" stroke="#52A64A" stroke-width="1.5"/>
<circle cx="528.0" cy="364.8" r="3.3" fill="#fff" stroke="#52A64A" stroke-width="1.5"/>
<circle cx="574.3" cy="350.1" r="3.3" fill="#fff" stroke="#52A64A" stroke-width="1.5"/>
<circle cx="620.7" cy="372.7" r="3.3" fill="#fff" stroke="#52A64A" stroke-width="1.5"/>
<circle cx="667.0" cy="333.9" r="3.3" fill="#fff" stroke="#52A64A" stroke-width="1.5"/>
<circle cx="713.3" cy="456.1" r="3.3" fill="#fff" stroke="#52A64A" stroke-width="1.5"/>
<path d="M203.7,413.8 C211.4,411.8 234.6,398.1 250.0,401.9 C265.4,405.7 280.9,437.3 296.3,436.5 C311.8,435.7 327.2,397.1 342.7,397.1 C358.1,397.0 373.6,430.0 389.0,436.1 C404.4,442.3 419.9,437.7 435.3,434.1 C450.8,430.5 466.2,416.6 481.7,414.5 C497.1,412.3 512.6,419.3 528.0,421.3 C543.4,423.3 558.9,424.3 574.3,426.5 C589.8,428.8 605.2,438.4 620.7,434.8 C636.1,431.2 651.6,404.5 667.0,404.9 C682.4,405.3 705.6,431.8 713.3,437.2" fill="none" stroke="#E34A4A" stroke-width="2.2" stroke-linecap="round"/>
<circle cx="203.7" cy="413.8" r="3.3" fill="#fff" stroke="#D43C3C" stroke-width="1.5"/>
<circle cx="250.0" cy="401.9" r="3.3" fill="#fff" stroke="#D43C3C" stroke-width="1.5"/>
<circle cx="296.3" cy="436.5" r="3.3" fill="#fff" stroke="#D43C3C" stroke-width="1.5"/>
<circle cx="342.7" cy="397.1" r="3.3" fill="#fff" stroke="#D43C3C" stroke-width="1.5"/>
<circle cx="389.0" cy="436.1" r="3.3" fill="#fff" stroke="#D43C3C" stroke-width="1.5"/>
<circle cx="435.3" cy="434.1" r="3.3" fill="#fff" stroke="#D43C3C" stroke-width="1.5"/>
<circle cx="481.7" cy="414.5" r="3.3" fill="#fff" stroke="#D43C3C" stroke-width="1.5"/>
<circle cx="528.0" cy="421.3" r="3.3" fill="#fff" stroke="#D43C3C" stroke-width="1.5"/>
<circle cx="574.3" cy="426.5" r="3.3" fill="#fff" stroke="#D43C3C" stroke-width="1.5"/>
<circle cx="620.7" cy="434.8" r="3.3" fill="#fff" stroke="#D43C3C" stroke-width="1.5"/>
<circle cx="667.0" cy="404.9" r="3.3" fill="#fff" stroke="#D43C3C" stroke-width="1.5"/>
<circle cx="713.3" cy="437.2" r="3.3" fill="#fff" stroke="#D43C3C" stroke-width="1.5"/>
<line x1="558.3" y1="294.4" x2="573.8" y2="294.4" stroke="#74C154" stroke-width="2"/>
<circle cx="566.0" cy="294.4" r="1.8" fill="#fff" stroke="#74C154" stroke-width="1"/>
<text x="574.8" y="296.8" font-size="6.7" fill="#505050" textLength="69.4" lengthAdjust="spacingAndGlyphs">RECEITAS (Recebidos)</text>
<line x1="655.8" y1="294.4" x2="671.3" y2="294.4" stroke="#E34A4A" stroke-width="2"/>
<circle cx="663.5" cy="294.4" r="1.8" fill="#fff" stroke="#E34A4A" stroke-width="1"/>
<text x="672.3" y="296.8" font-size="6.7" fill="#505050" textLength="57.8" lengthAdjust="spacingAndGlyphs">DESPESAS (Pagas)</text>
<rect x="134.2" y="491.0" width="610.9" height="199.5" rx="7" ry="7" fill="none" stroke="#C9D6E6" stroke-width="1.6"/>
<rect x="133.9" y="489.8" width="610.9" height="199.6" rx="7" ry="7" fill="#fff" stroke="#85A4CA" stroke-width="1.15"/>
<text x="183.3" y="512.2" font-size="12.55" font-weight="bold" fill="#111">Saldo Acumulado e Lucro</text>
<line x1="180.5" y1="666.5" x2="736.5" y2="666.5" stroke="#A0A0A0" stroke-width="0.8" stroke-dasharray="2.2,0.85"/>
<line x1="177.5" y1="666.5" x2="180.5" y2="666.5" stroke="#A6A6A6" stroke-width="1"/>
<text x="173.2" y="668.8" font-size="7" fill="#404040" text-anchor="end">-10.000</text>
<line x1="177.5" y1="649.5" x2="736.5" y2="649.5" stroke="#C2C2C2" stroke-width="1"/>
<text x="173.2" y="652.1" font-size="7" fill="#404040" text-anchor="end">0</text>
<line x1="180.5" y1="632.5" x2="736.5" y2="632.5" stroke="#A0A0A0" stroke-width="0.8" stroke-dasharray="2.2,0.85"/>
<line x1="177.5" y1="632.5" x2="180.5" y2="632.5" stroke="#A6A6A6" stroke-width="1"/>
<text x="173.2" y="635.4" font-size="7" fill="#404040" text-anchor="end">10.000</text>
<line x1="180.5" y1="616.5" x2="736.5" y2="616.5" stroke="#A0A0A0" stroke-width="0.8" stroke-dasharray="2.2,0.85"/>
<line x1="177.5" y1="616.5" x2="180.5" y2="616.5" stroke="#A6A6A6" stroke-width="1"/>
<text x="173.2" y="618.7" font-size="7" fill="#404040" text-anchor="end">20.000</text>
<line x1="180.5" y1="599.5" x2="736.5" y2="599.5" stroke="#A0A0A0" stroke-width="0.8" stroke-dasharray="2.2,0.85"/>
<line x1="177.5" y1="599.5" x2="180.5" y2="599.5" stroke="#A6A6A6" stroke-width="1"/>
<text x="173.2" y="602.0" font-size="7" fill="#404040" text-anchor="end">30.000</text>
<line x1="180.5" y1="582.5" x2="736.5" y2="582.5" stroke="#A0A0A0" stroke-width="0.8" stroke-dasharray="2.2,0.85"/>
<line x1="177.5" y1="582.5" x2="180.5" y2="582.5" stroke="#A6A6A6" stroke-width="1"/>
<text x="173.2" y="585.4" font-size="7" fill="#404040" text-anchor="end">40.000</text>
<line x1="180.5" y1="566.5" x2="736.5" y2="566.5" stroke="#A0A0A0" stroke-width="0.8" stroke-dasharray="2.2,0.85"/>
<line x1="177.5" y1="566.5" x2="180.5" y2="566.5" stroke="#A6A6A6" stroke-width="1"/>
<text x="173.2" y="568.7" font-size="7" fill="#404040" text-anchor="end">50.000</text>
<line x1="180.5" y1="549.5" x2="736.5" y2="549.5" stroke="#A0A0A0" stroke-width="0.8" stroke-dasharray="2.2,0.85"/>
<line x1="177.5" y1="549.5" x2="180.5" y2="549.5" stroke="#A6A6A6" stroke-width="1"/>
<text x="173.2" y="552.0" font-size="7" fill="#404040" text-anchor="end">60.000</text>
<line x1="180.5" y1="532.5" x2="736.5" y2="532.5" stroke="#A0A0A0" stroke-width="0.8" stroke-dasharray="2.2,0.85"/>
<line x1="177.5" y1="532.5" x2="180.5" y2="532.5" stroke="#A6A6A6" stroke-width="1"/>
<text x="173.2" y="535.3" font-size="7" fill="#404040" text-anchor="end">70.000</text>
<line x1="180.5" y1="532.8" x2="180.5" y2="666.3" stroke="#A6A6A6" stroke-width="1"/>
<line x1="226.5" y1="532.8" x2="226.5" y2="666.3" stroke="#A0A0A0" stroke-width="0.8" stroke-dasharray="2.2,0.85"/>
<line x1="273.5" y1="532.8" x2="273.5" y2="666.3" stroke="#A0A0A0" stroke-width="0.8" stroke-dasharray="2.2,0.85"/>
<line x1="319.5" y1="532.8" x2="319.5" y2="666.3" stroke="#A0A0A0" stroke-width="0.8" stroke-dasharray="2.2,0.85"/>
<line x1="365.5" y1="532.8" x2="365.5" y2="666.3" stroke="#A0A0A0" stroke-width="0.8" stroke-dasharray="2.2,0.85"/>
<line x1="412.5" y1="532.8" x2="412.5" y2="666.3" stroke="#A0A0A0" stroke-width="0.8" stroke-dasharray="2.2,0.85"/>
<line x1="458.5" y1="532.8" x2="458.5" y2="666.3" stroke="#A0A0A0" stroke-width="0.8" stroke-dasharray="2.2,0.85"/>
<line x1="504.5" y1="532.8" x2="504.5" y2="666.3" stroke="#A0A0A0" stroke-width="0.8" stroke-dasharray="2.2,0.85"/>
<line x1="551.5" y1="532.8" x2="551.5" y2="666.3" stroke="#A0A0A0" stroke-width="0.8" stroke-dasharray="2.2,0.85"/>
<line x1="597.5" y1="532.8" x2="597.5" y2="666.3" stroke="#A0A0A0" stroke-width="0.8" stroke-dasharray="2.2,0.85"/>
<line x1="643.5" y1="532.8" x2="643.5" y2="666.3" stroke="#A0A0A0" stroke-width="0.8" stroke-dasharray="2.2,0.85"/>
<line x1="690.5" y1="532.8" x2="690.5" y2="666.3" stroke="#A0A0A0" stroke-width="0.8" stroke-dasharray="2.2,0.85"/>
<line x1="736.5" y1="532.8" x2="736.5" y2="666.3" stroke="#A0A0A0" stroke-width="0.8" stroke-dasharray="2.2,0.85"/>
<text x="203.7" y="678.5" font-size="8" font-weight="bold" fill="#222" text-anchor="middle">Janeiro</text>
<text x="250.0" y="678.5" font-size="8" font-weight="bold" fill="#222" text-anchor="middle">Fevereiro</text>
<text x="296.3" y="678.5" font-size="8" font-weight="bold" fill="#222" text-anchor="middle">Março</text>
<text x="342.7" y="678.5" font-size="8" font-weight="bold" fill="#222" text-anchor="middle">Abril</text>
<text x="389.0" y="678.5" font-size="8" font-weight="bold" fill="#222" text-anchor="middle">Maio</text>
<text x="435.3" y="678.5" font-size="8" font-weight="bold" fill="#222" text-anchor="middle">Junho</text>
<text x="481.7" y="678.5" font-size="8" font-weight="bold" fill="#222" text-anchor="middle">Julho</text>
<text x="528.0" y="678.5" font-size="8" font-weight="bold" fill="#222" text-anchor="middle">Agosto</text>
<text x="574.3" y="678.5" font-size="8" font-weight="bold" fill="#222" text-anchor="middle">Setembro</text>
<text x="620.7" y="678.5" font-size="8" font-weight="bold" fill="#222" text-anchor="middle">Outubro</text>
<text x="667.0" y="678.5" font-size="8" font-weight="bold" fill="#222" text-anchor="middle">Novembro</text>
<text x="713.3" y="678.5" font-size="8" font-weight="bold" fill="#222" text-anchor="middle">Dezembro</text>
<path d="M203.7,620.3 C211.4,619.2 234.6,616.1 250.0,613.8 C265.4,611.5 280.9,608.4 296.3,606.3 C311.8,604.3 327.2,603.6 342.7,601.5 C358.1,599.4 373.6,597.2 389.0,593.9 C404.4,590.6 419.9,585.1 435.3,581.6 C450.8,578.2 466.2,575.5 481.7,572.9 C497.1,570.4 512.6,568.9 528.0,566.3 C543.4,563.7 558.9,560.0 574.3,557.3 C589.8,554.6 605.2,552.6 620.7,550.0 C636.1,547.3 651.6,542.6 667.0,541.6 C682.4,540.6 705.6,543.5 713.3,543.8" fill="none" stroke="#F2DC1A" stroke-width="2.2" stroke-linecap="round"/>
<circle cx="203.7" cy="620.3" r="3.3" fill="#fff" stroke="#EBC51E" stroke-width="1.5"/>
<circle cx="250.0" cy="613.8" r="3.3" fill="#fff" stroke="#EBC51E" stroke-width="1.5"/>
<circle cx="296.3" cy="606.3" r="3.3" fill="#fff" stroke="#EBC51E" stroke-width="1.5"/>
<circle cx="342.7" cy="601.5" r="3.3" fill="#fff" stroke="#EBC51E" stroke-width="1.5"/>
<circle cx="389.0" cy="593.9" r="3.3" fill="#fff" stroke="#EBC51E" stroke-width="1.5"/>
<circle cx="435.3" cy="581.6" r="3.3" fill="#fff" stroke="#EBC51E" stroke-width="1.5"/>
<circle cx="481.7" cy="572.9" r="3.3" fill="#fff" stroke="#EBC51E" stroke-width="1.5"/>
<circle cx="528.0" cy="566.3" r="3.3" fill="#fff" stroke="#EBC51E" stroke-width="1.5"/>
<circle cx="574.3" cy="557.3" r="3.3" fill="#fff" stroke="#EBC51E" stroke-width="1.5"/>
<circle cx="620.7" cy="550.0" r="3.3" fill="#fff" stroke="#EBC51E" stroke-width="1.5"/>
<circle cx="667.0" cy="541.6" r="3.3" fill="#fff" stroke="#EBC51E" stroke-width="1.5"/>
<circle cx="713.3" cy="543.8" r="3.3" fill="#fff" stroke="#EBC51E" stroke-width="1.5"/>
<path d="M203.7,645.4 C211.4,645.0 234.6,643.6 250.0,643.1 C265.4,642.6 280.9,641.9 296.3,642.1 C311.8,642.4 327.2,644.8 342.7,644.8 C358.1,644.8 373.6,643.2 389.0,642.0 C404.4,640.8 419.9,637.5 435.3,637.4 C450.8,637.2 466.2,640.0 481.7,640.9 C497.1,641.8 512.6,643.0 528.0,643.0 C543.4,642.9 558.9,640.7 574.3,640.6 C589.8,640.5 605.2,642.2 620.7,642.3 C636.1,642.4 651.6,639.7 667.0,641.2 C682.4,642.8 705.6,650.1 713.3,651.8" fill="none" stroke="#1A9BD8" stroke-width="2.2" stroke-linecap="round"/>
<circle cx="203.7" cy="645.4" r="3.3" fill="#fff" stroke="#168CC8" stroke-width="1.5"/>
<circle cx="250.0" cy="643.1" r="3.3" fill="#fff" stroke="#168CC8" stroke-width="1.5"/>
<circle cx="296.3" cy="642.1" r="3.3" fill="#fff" stroke="#168CC8" stroke-width="1.5"/>
<circle cx="342.7" cy="644.8" r="3.3" fill="#fff" stroke="#168CC8" stroke-width="1.5"/>
<circle cx="389.0" cy="642.0" r="3.3" fill="#fff" stroke="#168CC8" stroke-width="1.5"/>
<circle cx="435.3" cy="637.4" r="3.3" fill="#fff" stroke="#168CC8" stroke-width="1.5"/>
<circle cx="481.7" cy="640.9" r="3.3" fill="#fff" stroke="#168CC8" stroke-width="1.5"/>
<circle cx="528.0" cy="643.0" r="3.3" fill="#fff" stroke="#168CC8" stroke-width="1.5"/>
<circle cx="574.3" cy="640.6" r="3.3" fill="#fff" stroke="#168CC8" stroke-width="1.5"/>
<circle cx="620.7" cy="642.3" r="3.3" fill="#fff" stroke="#168CC8" stroke-width="1.5"/>
<circle cx="667.0" cy="641.2" r="3.3" fill="#fff" stroke="#168CC8" stroke-width="1.5"/>
<circle cx="713.3" cy="651.8" r="3.3" fill="#fff" stroke="#168CC8" stroke-width="1.5"/>
<line x1="549.7" y1="507.5" x2="565.2" y2="507.5" stroke="#F2DC1A" stroke-width="2"/>
<circle cx="557.4" cy="507.5" r="1.8" fill="#fff" stroke="#F2DC1A" stroke-width="1"/>
<text x="566.2" y="509.9" font-size="6.7" fill="#505050" textLength="73.6" lengthAdjust="spacingAndGlyphs">Saldo Acumulado (Final)</text>
<line x1="652.7" y1="507.5" x2="668.2" y2="507.5" stroke="#1A9BD8" stroke-width="2"/>
<circle cx="660.4" cy="507.5" r="1.8" fill="#fff" stroke="#1A9BD8" stroke-width="1"/>
<text x="669.2" y="509.9" font-size="6.7" fill="#505050" textLength="47.4" lengthAdjust="spacingAndGlyphs">Lucro / Prejuizo</text>
</svg>
<!-- scroll + status -->
<div class="abs" style="left:0;top:692px;width:1280px;height:17px;background:#F7F7F7;border-top:1px solid #E8E8E8;"></div>
<div class="abs" style="left:15px;top:698px;width:1px;height:1px;background:#666;box-shadow:0 2px 0 #666,0 4px 0 #666;"></div>
<svg class="abs" style="left:26px;top:698px" width="5" height="6" viewBox="0 0 5 6"><path d="M4,0.5 L0.5,3 L4,5.5 Z" fill="#555"/></svg>
<div class="abs" style="left:33px;top:698.1px;width:1189px;height:4.7px;background:#777;border-radius:2.4px;"></div>
<div class="abs" style="left:0;top:709px;width:1280px;height:11px;background:#F3F3F3;border-top:1px solid #DADADA;"></div>
<div class="tt" style="left:4px;top:712px;font-size:6px;color:#444;">Pronto</div>
<svg class="abs" style="left:32px;top:711px" width="9" height="7" viewBox="0 0 9 7"><rect x="0.5" y="0.5" width="8" height="6" fill="none" stroke="#555" stroke-width="0.7"/><line x1="2" y1="2.5" x2="7" y2="2.5" stroke="#555" stroke-width="0.6"/><line x1="2" y1="4.5" x2="7" y2="4.5" stroke="#555" stroke-width="0.6"/></svg>
<svg class="abs" style="left:49px;top:710.5px" width="8" height="8" viewBox="0 0 8 8"><circle cx="4" cy="1.5" r="1" fill="#555"/><path d="M0.5,3 H7.5 M4,3 V5 L2,7.5 M4,5 L6,7.5" fill="none" stroke="#555" stroke-width="0.7"/></svg>
<div class="tt" style="left:59px;top:711.8px;font-size:5.8px;font-weight:bold;color:#333;letter-spacing:-0.1px;">Acessibilidade: investigar</div>
<div class="abs" style="left:1168px;top:709.5px;width:20.6px;height:10.5px;background:#E2E2E2;"></div>
<svg class="abs" style="left:1175px;top:711px" width="7" height="7" viewBox="0 0 7 7"><rect x="0" y="0" width="7" height="7" fill="#3A3A3A"/><path d="M1.75,0 V7 M3.5,0 V7 M5.25,0 V7 M0,1.75 H7 M0,3.5 H7 M0,5.25 H7" stroke="#E2E2E2" stroke-width="0.5"/></svg>
<svg class="abs" style="left:1195px;top:711px" width="8" height="7" viewBox="0 0 8 7"><rect x="0.4" y="0.4" width="7.2" height="6.2" fill="#9A9A9A" stroke="#555" stroke-width="0.8"/><rect x="2.2" y="1.3" width="3.6" height="4.4" fill="#DADADA"/><rect x="2.6" y="1.3" width="2.8" height="4.4" fill="#777"/></svg>
<svg class="abs" style="left:1216px;top:711px" width="8" height="7" viewBox="0 0 8 7"><path d="M0.4,0.4 H7.6 V6.6 H0.4 Z M2.8,0.4 V4.2 H6 V0.4 M4.4,0.4 V4.2" fill="none" stroke="#555" stroke-width="0.8"/></svg>
<div class="abs" style="left:1233.6px;top:714px;width:4.2px;height:0.9px;background:#444;"></div>
<div class="abs" style="left:1240px;top:715px;width:40px;height:0.8px;background:#A8A8A8;"></div>
<div class="abs" style="left:1266.4px;top:712px;width:2.3px;height:5.7px;background:#555;border-radius:0.5px;"></div>
</body></html>
